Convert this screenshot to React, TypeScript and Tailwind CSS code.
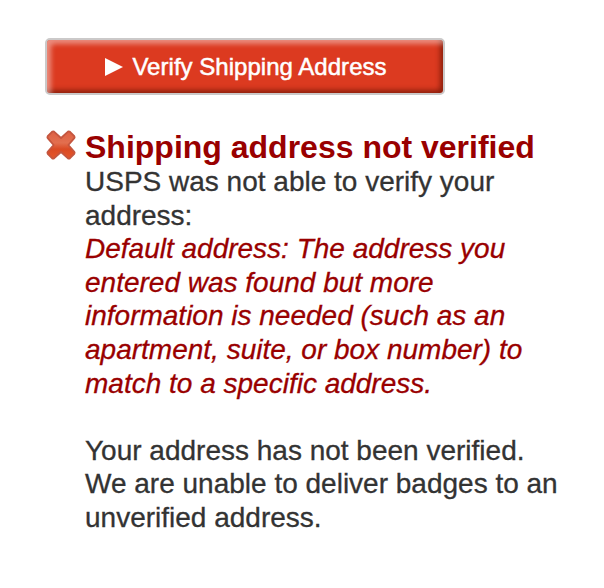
function CrossIcon() {
  return (
    <svg viewBox="0 0 32 32" className="h-8 w-8 shrink-0">
      <defs>
        <linearGradient id="cross" x1="0" y1="0" x2="0" y2="1">
          <stop offset="0" stopColor="#de6043" />
          <stop offset="0.42" stopColor="#e26f4f" />
          <stop offset="0.65" stopColor="#da4a24" />
          <stop offset="1" stopColor="#e5562a" />
        </linearGradient>
      </defs>
      <path
        d="M9 2.6 L16 9 L23 2.6 Q24 2 25 2.8 L29.3 7.2 Q30 8.2 29.3 9.2 L23.4 16 L29.3 22.8 Q30 23.8 29.3 24.8 L25 29.2 Q24 30 23 29.4 L16 23 L9 29.4 Q8 30 7 29.2 L2.7 24.8 Q2 23.8 2.7 22.8 L8.6 16 L2.7 9.2 Q2 8.2 2.7 7.2 L7 2.8 Q8 2 9 2.6 Z"
        fill="url(#cross)"
        stroke="#c4563f"
        strokeWidth="1.8"
        strokeLinejoin="round"
      />
    </svg>
  )
}

function PlayIcon() {
  return (
    <svg viewBox="0 0 18 18" className="mr-[9px] h-[18px] w-[18px] fill-white">
      <path d="M0 0 L18 9 L0 18 Z" />
    </svg>
  )
}

export default function App() {
  return (
    <main className="h-[588px] w-[604px] bg-white pt-[38px] pl-[45px] font-['Liberation_Sans',Arial,sans-serif] text-[#333]">
      <button className="flex h-[57px] w-[400px] items-center justify-center rounded-[5px] border-2 border-[#cbc9c9] bg-[#dc3a20] pl-0.5 text-[24px] tracking-[0.03px] text-white shadow-[inset_5px_5px_5px_-1px_rgba(255,255,255,0.42),inset_-4px_-4px_5px_-1px_rgba(90,15,0,0.6)] [-webkit-text-stroke:0.5px_currentColor]">
        <PlayIcon />
        Verify Shipping Address
      </button>
      <section className="mt-[34px] flex gap-2">
        <CrossIcon />
        <div className="text-[28px] leading-[33.6px] whitespace-nowrap [-webkit-text-stroke:0.3px_currentColor]">
          <h1 className="text-[32px] leading-[36px] font-bold text-[#990000] [-webkit-text-stroke:0]">
            Shipping address not verified
          </h1>
          <p>USPS was not able to verify your<br />address:</p>
          <p className="text-[#990000] italic">
            Default address: The address you<br />entered was found but more<br />information is needed (such as an
            <br />apartment, suite, or box number) to<br />match to a specific address.
          </p>
          <p className="mt-[33.6px]">
            Your address has not been verified.<br />We are unable to deliver badges to an<br />unverified address.
          </p>
        </div>
      </section>
    </main>
  )
}
